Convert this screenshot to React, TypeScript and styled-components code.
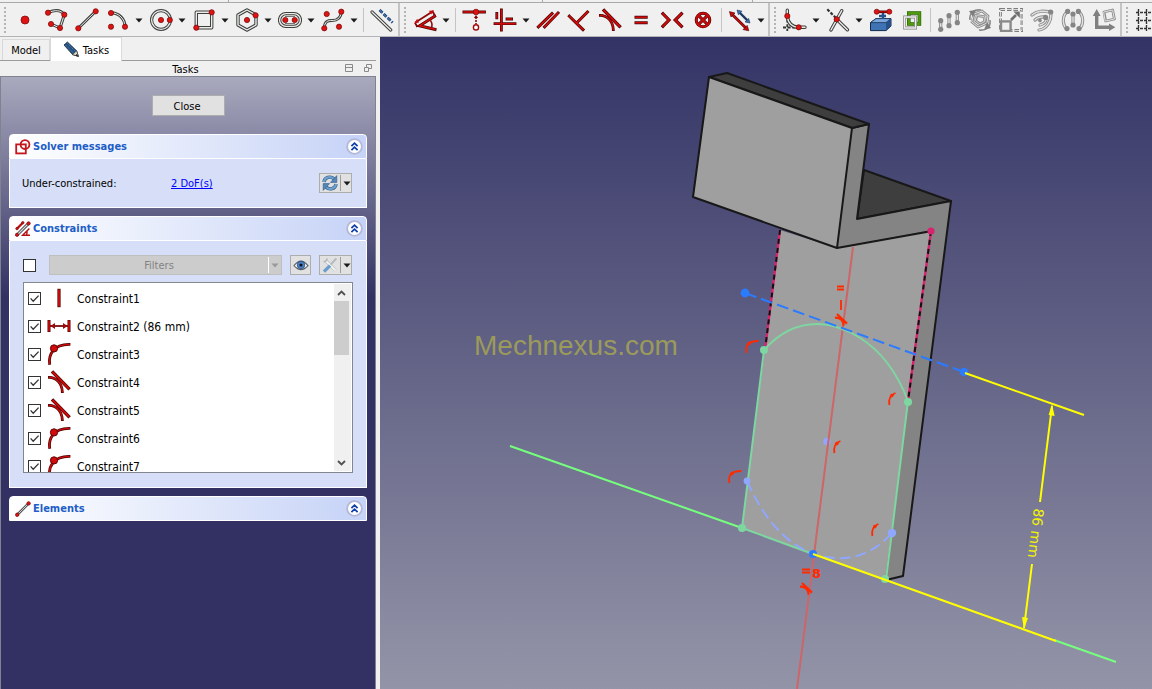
import React from "react";
import styled, { createGlobalStyle } from "styled-components";

const GlobalStyle = createGlobalStyle`
  * { box-sizing: border-box; }
  body {
    margin: 0;
    background: #f0f0f0;
    color: #000;
    font-family: "DejaVu Sans Condensed", "DejaVu Sans", sans-serif;
    font-size: 11px;
    line-height: 14px;
  }
  button, input { font: inherit; color: inherit; margin: 0; padding: 0; }
`;

/* ---------- window frame ---------- */

const Window = styled.div`
  display: flex;
  flex-direction: column;
  min-height: 100vh;
`;

const UpperEdge = styled.div`
  display: flex;
  flex: none;
  height: 3px;
  overflow: hidden;
  border-bottom: 1px solid #a9a9a9;
`;

const EdgeSegment = styled.div<{ $width: number }>`
  flex: none;
  width: ${(p) => p.$width}px;
  border-right: 1px solid #a9a9a9;
`;

const Toolbars = styled.div`
  display: flex;
  flex: none;
  height: 34px;
  overflow: hidden;
  border-bottom: 1px solid #b4b4b4;
`;

const ToolGroup = styled.div`
  display: flex;
  flex: none;
  padding-top: 1px;
  border-right: 2px solid #c4c4c4;
  &:last-child { border-right: 0; }
`;

const Grip = styled.div`
  flex: none;
  width: 2px;
  margin: 3px 4px;
  background: repeating-linear-gradient(#b4b4b4 0 2px, transparent 2px 4px);
`;

const ToolButton = styled.button<{ $menu?: boolean }>`
  display: flex;
  flex: none;
  align-items: center;
  gap: 5px;
  width: ${(p) => (p.$menu ? 43 : 31)}px;
  padding-left: 3px;
  border: 0;
  background: none;
`;

const ToolSeparator = styled.div`
  flex: none;
  width: 1px;
  margin: 4px 3px 4px 2px;
  background: #c4c4c4;
`;

const Main = styled.div`
  display: flex;
  flex: 1;
`;

/* ---------- dock ---------- */

const Dock = styled.aside`
  display: flex;
  flex-direction: column;
  flex: none;
  width: 380px;
  padding-right: 4px;
`;

const TabBar = styled.div`
  display: flex;
  align-items: flex-end;
  height: 24px;
  padding-left: 2px;
  border-bottom: 1px solid #9b9b9b;
`;

const Tab = styled.button<{ $active?: boolean }>`
  display: flex;
  align-items: center;
  justify-content: center;
  gap: 3px;
  width: ${(p) => (p.$active ? 72 : 48)}px;
  height: ${(p) => (p.$active ? 24 : 21)}px;
  margin-bottom: ${(p) => (p.$active ? -1 : 0)}px;
  border: 1px solid #d9d9d9;
  border-bottom: 0;
  background: ${(p) => (p.$active ? "#fff" : "#f0f0f0")};
`;

/* text set one pixel below the optical centre of its line */
const Caption = styled.span`
  padding-top: 2px;
`;

const DockTitle = styled.div`
  display: flex;
  align-items: center;
  height: 15px;
  gap: 8px;
  padding-right: 3px;
`;

const DockName = styled.div`
  flex: 1;
  padding: 2px 0 0 35px;
  text-align: center;
`;

const TitleButton = styled.button`
  display: flex;
  border: 0;
  background: none;
`;

const TaskArea = styled.div`
  flex: 1;
  padding: 18px 8px 0;
  border: 1px solid #7f8390;
  border-bottom: 0;
  background: linear-gradient(#a9a9be, #333164 220px);
`;

const PushButton = styled.button`
  display: block;
  width: 73px;
  height: 21px;
  margin: 0 auto 18px;
  padding: 2px 2px 0 0;
  border: 1px solid #adadad;
  background: #e1e1e1;
`;

const Card = styled.section`
  margin-bottom: 8px;
`;

const CardHeader = styled.header`
  display: flex;
  align-items: center;
  gap: 2px;
  height: 25px;
  padding: 0 3px 0 5px;
  border: 1px solid #fff;
  border-radius: 4px 4px 0 0;
  background: linear-gradient(90deg, #fff, #c6d3f7);
`;

const CardTitle = styled.h2`
  flex: 1;
  margin: 0;
  color: #215dc6;
  font-size: 11px;
  font-weight: bold;
  line-height: 14px;
`;

const Collapse = styled.button`
  display: flex;
  border: 0;
  background: none;
`;

const CardBody = styled.div`
  padding: 14px 13px;
  border: 1px solid #fff;
  border-top: 0;
  background: #d6dff7;
`;

const Row = styled.div`
  display: flex;
  align-items: center;
`;

const StatusLabel = styled.span`
  width: 149px;
  margin-left: -1px;
  padding-top: 2px;
`;

const StatusLink = styled.a`
  flex: 1;
  padding-top: 2px;
  color: #0000ff;
  text-decoration: underline;
`;

const SmallButton = styled.button<{ $width: number }>`
  display: flex;
  flex: none;
  align-items: center;
  justify-content: center;
  width: ${(p) => p.$width}px;
  height: 20px;
  margin-right: 1px;
  border: 1px solid #adadad;
  background: #e1e1e1;
`;

const SplitLine = styled.span`
  width: 1px;
  height: 16px;
  margin: 0 2px 0 1px;
  background: #9d9d9d;
`;

const Check = styled.input`
  appearance: none;
  flex: none;
  width: 13px;
  height: 13px;
  border: 1px solid #333;
  background: #fff;
`;

const CheckHolder = styled.span`
  display: grid;
  flex: none;
  > * { grid-area: 1 / 1; }
  > svg { pointer-events: none; z-index: 1; }
`;

const FilterRow = styled(Row)`
  margin-bottom: 7px;
`;

const FilterButton = styled.button`
  display: flex;
  flex: 1;
  align-items: center;
  height: 20px;
  margin: 0 8px 0 13px;
  border: 1px solid #bfbfbf;
  background: #cccccc;
  color: #838383;
`;

const FilterText = styled.span`
  flex: 1;
  padding-top: 2px;
`;

const FilterArrow = styled.span`
  display: flex;
  align-items: center;
  justify-content: center;
  width: 13px;
  height: 16px;
  border-left: 1px solid #fff;
`;

const EyeButton = styled(SmallButton)`
  margin-right: 8px;
`;

const ListBox = styled.div`
  display: flex;
  height: 191px;
  overflow: hidden;
  padding: 1px;
  border: 1px solid #828790;
  background: #fff;
`;

const List = styled.ul`
  flex: 1;
  margin: 0;
  padding: 0;
  list-style: none;
`;

const ListItem = styled.li`
  height: 28px;
`;

const ListLabel = styled.label`
  display: flex;
  align-items: center;
  gap: 6px;
  height: 28px;
  padding-left: 3px;
  font-size: 12px;
`;

const ScrollBar = styled.div`
  display: flex;
  flex-direction: column;
  width: 17px;
  padding-right: 2px;
  background: #f0f0f0;
`;

const ScrollButton = styled.button`
  display: flex;
  align-items: center;
  justify-content: center;
  height: 17px;
  border: 0;
  background: none;
`;

const ScrollTrack = styled.div`
  flex: 1;
`;

const ScrollThumb = styled.div`
  height: 54px;
  background: #cdcdcd;
`;

const Viewport = styled.main`
  flex: 1;
  min-width: 0;
  display: flex;
  background: linear-gradient(#333366, #9494a8);
`;

const Scene = styled.svg`
  display: block;
  width: 100%;
  height: 100%;
`;

/* ---------- icon strokes ---------- */

type P = { d: string; w?: number };

/* hollow geometry line: dark rim with a light core */
const Geo = ({ d, w = 3 }: P) => (
  <g fill="none" strokeLinecap="round" strokeLinejoin="round">
    <path d={d} stroke="#3c3f3c" strokeWidth={w} />
    <path d={d} stroke="#eceeea" strokeWidth={w - 2} />
  </g>
);

/* constraint line: dark red rim with a bright core */
const Red = ({ d, w = 3 }: P) => (
  <g fill="none" strokeLinecap="square">
    <path d={d} stroke="#4a0505" strokeWidth={w} />
    <path d={d} stroke="#d40a0a" strokeWidth={w - 1.4} />
  </g>
);

const Dot = ({ x, y, r = 2.6 }: { x: number; y: number; r?: number }) => (
  <circle cx={x} cy={y} r={r} fill="#e01313" stroke="#7d0c0c" strokeWidth=".8" />
);

/* disabled tool line */
const Gray = ({ d, w = 3 }: P) => (
  <g fill="none" strokeLinejoin="round" strokeLinecap="round">
    <path d={d} stroke="#8c8c8c" strokeWidth={w} />
    <path d={d} stroke="#e2e2e2" strokeWidth={w - 1.8} />
  </g>
);

const GrayDots = ({ at, r = 2.6 }: { at: number[][]; r?: number }) => (
  <g fill="#858585">
    {at.map(([x, y]) => (
      <circle key={`${x}-${y}`} cx={x} cy={y} r={r} />
    ))}
  </g>
);

const Icon = ({ size = 24, children }: { size?: number; children: React.ReactNode }) => (
  <svg width={size} height={size} viewBox="0 0 24 24" aria-hidden="true">
    {children}
  </svg>
);

const Down = ({ color = "#1a1a1a" }: { color?: string }) => (
  <svg width="8" height="5" viewBox="0 0 8 5" aria-hidden="true">
    <path d="M.5.5h7L4 4.5z" fill={color} />
  </svg>
);

const TangentShape = () => (
  <>
    <Red d="M2.4 7.4C9 7.6 15 13 15.3 21.6" w={2.8} />
    <Red d="M6.2 2.6L21.4 18.2" w={3.4} />
  </>
);

const icons: Record<string, React.ReactNode> = {
  point: <Dot x={12} y={12} r={4} />,
  polyline: (
    <>
      <Geo d="M4 4.7C11 1.5 17 2 20.3 6.7L16 20 7 16" />
      <Dot x={4} y={4.7} /><Dot x={20.3} y={6.7} /><Dot x={16} y={20} /><Dot x={7} y={16} />
    </>
  ),
  line: (
    <>
      <Geo d="M3.3 20.3L20.7 3.3" />
      <Dot x={3.3} y={20.3} /><Dot x={20.7} y={3.3} />
    </>
  ),
  arc: (
    <>
      <Geo d="M5 4.7C13 4.7 19 11 19 18.7" />
      <Dot x={5} y={5} /><Dot x={19} y={18.7} /><Dot x={5} y={18.7} />
    </>
  ),
  circle: (
    <>
      <circle cx="12" cy="12" r="9.4" fill="none" stroke="#3c3f3c" strokeWidth="3.2" />
      <circle cx="12" cy="12" r="9.4" fill="none" stroke="#eceeea" strokeWidth="1.3" />
      <Dot x={12} y={12} /><Dot x={20.8} y={12} />
    </>
  ),
  rect: (
    <>
      <Geo d="M4.3 4.3H19.7V19.7H4.3Z" w={3.4} />
      <Dot x={4.3} y={19.7} /><Dot x={19.7} y={4.3} />
    </>
  ),
  hexagon: (
    <>
      <Geo d="M12 2L21 7V17L12 22 3 17V7Z" w={3.4} />
      <Dot x={12} y={12} /><Dot x={20.6} y={7.3} />
    </>
  ),
  slot: (
    <>
      <Geo d="M8 5.6H16A6.4 6.4 0 0 1 16 18.4H8A6.4 6.4 0 0 1 8 5.6Z" w={3.4} />
      <path d="M7 8.5H17M7 15.5H17" stroke="#777" strokeWidth="1" />
      <Dot x={7.3} y={12} /><Dot x={16.7} y={12} />
    </>
  ),
  bspline: (
    <>
      <Geo d="M3.3 20.3C3.5 13 7 12.5 11 12.5S20 11 20.3 3.7" />
      <Dot x={5.7} y={6} /><Dot x={20.3} y={3.7} /><Dot x={3.3} y={20.3} /><Dot x={18} y={18.7} />
    </>
  ),
  construction: (
    <>
      <Geo d="M2 4L20.7 22" w={3.2} />
      <path d="M9.6 2L22.6 14.6" stroke="#1c3a63" strokeWidth="2.8" strokeDasharray="4 1.6" />
      <path d="M9.6 2L22.6 14.6" stroke="#3d73b3" strokeWidth="1.4" strokeDasharray="4 1.6" />
    </>
  ),
  dimension: (
    <>
      <path d="M2 14.7L20.3 3M2 14.7L4.4 19M19.4 3L22 8" stroke="#8d0909" strokeWidth="1.8" fill="none" />
      <path d="M1.4 15.2L4.2 10.8 6 14.4zM21 2.4L16 2.8 18 6.4z" fill="#cc0a0a" />
      <Red d="M21.6 8.2L6.6 17.8 22 21.4" w={3} />
      <path d="M17.4 12.4Q20 16 18.4 20" stroke="#9b0909" strokeWidth="1.6" fill="none" />
    </>
  ),
  pointOn: (
    <>
      <Red d="M2 4H22.4" />
      <Dot x={14} y={4} r={2.8} />
      <path d="M14 9V16" stroke="#8d0909" strokeWidth="1.6" strokeDasharray="2 1" />
      <path d="M14 7L16.2 10H11.8z" fill="#8d0909" />
      <circle cx="14" cy="19.4" r="2.6" fill="#fff" stroke="#a30b0b" strokeWidth="1.4" />
    </>
  ),
  horVert: <Red d="M8.4 2V22M2 15.7H22M3.8 5.4V9.8M14 11H18.6" w={2.8} />,
  parallel: <Red d="M2.4 18.8L16 5.6M8.6 18.8L22 5" w={3} />,
  perpendicular: <Red d="M2.4 8.2L16 21.6M9.6 15L20.4 4" w={3} />,
  tangent: <TangentShape />,
  equal: <Red d="M7 9.3H17.2M7 14.8H17.2" />,
  symmetric: <Red d="M3 5.8L9 12 3 18.2M21.4 5.8L15.2 12 21.4 18.2" w={3.2} />,
  block: (
    <>
      <circle cx="12" cy="12" r="6.8" fill="none" stroke="#4a0505" strokeWidth="3" />
      <path d="M7.6 7.6L16.4 16.4M16.4 7.6L7.6 16.4" stroke="#4a0505" strokeWidth="3" />
      <circle cx="12" cy="12" r="6.8" fill="none" stroke="#d40a0a" strokeWidth="1.7" />
      <path d="M7.6 7.6L16.4 16.4M16.4 7.6L7.6 16.4" stroke="#d40a0a" strokeWidth="1.7" />
    </>
  ),
  toggle: (
    <>
      <path d="M11 4L20.4 13.4" stroke="#1c3a63" strokeWidth="2.4" />
      <path d="M9 2L14 3.2 10.4 6.8zM22 15L17 14 20.6 10.4z" fill="#3d6cab" stroke="#1c3a63" strokeWidth=".6" />
      <Red d="M4 6.2L18.4 20.4" w={2.8} />
      <path d="M1.4 3.6L7 5 3 9zM20.8 22.8L15 21.6 19.2 17.4z" fill="#c80a0a" stroke="#4a0505" strokeWidth=".6" />
    </>
  ),
  fillet: (
    <>
      <path d="M4.3 7V23M0 19.5H16" stroke="#333" strokeWidth="1.8" strokeDasharray="3 1.6" />
      <Geo d="M4.3 2.2V8Q5.4 19 15.7 19.3H22" w={3.4} />
      <Dot x={4.3} y={8} /><Dot x={15.7} y={19.3} />
    </>
  ),
  trim: (
    <>
      <path d="M1.3 1.3L10 10" stroke="#333" strokeWidth="2.2" strokeDasharray="3 1.6" />
      <Geo d="M5 22L15.7 2.7M10.7 11.3L21.4 21.8" w={3.4} />
      <Dot x={10.7} y={11.3} />
    </>
  ),
  external: (
    <>
      <path d="M1.5 14.6L7 10.6H22V18L17 22.6H1.5Z" fill="#3f73b4" stroke="#12294b" />
      <path d="M1.5 14.6L7 10.6H22L17 14.6Z" fill="#7ba6da" stroke="#12294b" strokeWidth=".7" />
      <path d="M17 14.6V22.6L22 18V10.6Z" fill="#26508a" />
      <path d="M14 4V11M10 8H17" stroke="#26508a" strokeWidth="2.4" />
      <Red d="M7.7 3.8H20.3" w={2.6} />
      <Dot x={7.7} y={3.7} r={2.5} /><Dot x={20.3} y={3.7} r={2.5} />
    </>
  ),
  carbon: (
    <>
      <path d="M8.8 5H19.4V16H8.8Z" fill="none" stroke="#2d5c07" strokeWidth="3.6" />
      <path d="M8.8 5H19.4V16H8.8Z" fill="none" stroke="#4d9a0c" strokeWidth="2.4" />
      <path d="M4.6 9H15.6V20H4.6Z" fill="none" stroke="#808080" strokeWidth="2.8" />
      <path d="M4.6 9H15.6V20H4.6Z" fill="none" stroke="#eeeeee" strokeWidth="1.4" />
    </>
  ),
  symmetryTool: (
    <>
      <Gray d="M3.7 12.7V21.3M12 7.7V17.7M20.3 4.3V14.7" w={3.2} />
      <GrayDots at={[[3.7, 12.7], [3.7, 21.3], [12, 7.7], [12, 17.7], [20.3, 4.3], [20.3, 14.7]]} />
    </>
  ),
  rotateTool: (
    <>
      <Gray d="M6 6L14 3 20 8 19 15 10 19 4 14Z" w={2.8} />
      <Gray d="M9 7.6L16 8.6 16.6 13.6 12 16 7.6 12.6Z" w={2.6} />
      <path d="M2 12C1 5 6 1 13 2M22 12C23 19 18 23 11 22" fill="none" stroke="#8c8c8c" strokeWidth="1.6" />
      <path d="M1 3L8 2 5 9zM23 20L16 22 19 14z" fill="#7d7d7d" />
    </>
  ),
  scaleTool: (
    <>
      <rect x="1.5" y="1.5" width="21.5" height="21" fill="none" stroke="#7d7d7d" strokeWidth="2.8" strokeDasharray="4.5 2" />
      <rect x="1.5" y="1.5" width="21.5" height="21" fill="none" stroke="#e8e8e8" strokeWidth=".9" strokeDasharray="4.5 2" />
      <rect x="2" y="13.4" width="9.6" height="9.6" fill="#f0f0f0" stroke="#8a8a8a" strokeWidth="2.4" />
      <path d="M12 12L17 7" stroke="#6f6f6f" strokeWidth="2.6" />
      <path d="M20.8 3.4V10L14.4 3.4z" fill="#6f6f6f" />
    </>
  ),
  offsetTool: (
    <>
      <Gray d="M2 7C8 2 14 3 20.7 4C22 14 16 21 9 22" w={3.2} />
      <Gray d="M5 12C9 8 13 9 16 9C17 13 14 16 10 17" w={3.2} />
      <GrayDots at={[[20.7, 4], [15.6, 9.4]]} />
      <GrayDots at={[[10, 12.6]]} r={1.8} />
    </>
  ),
  copyTool: (
    <>
      <Gray d="M7 3C1 7 1 17 6 21M17 3C23 7 23 17 18 21M12 6V17" w={3.2} />
      <GrayDots at={[[6.6, 3.4], [6, 20.6], [17.4, 3.4], [18, 20.6], [12, 6], [12, 17]]} />
    </>
  ),
  moveTool: (
    <>
      <path d="M4.7 20V6M3 19.3H18" stroke="#808080" strokeWidth="3.4" />
      <path d="M4.7 1L8.6 8H.8zM23.4 19.3L17 23V15.6z" fill="#808080" />
      <Gray d="M12 4L20.6 2 22.4 11 13.6 13Z" w={2.8} />
    </>
  ),
  grid: (
    <path
      d="M3.5 1V23M11.5 1V23M19.5 1V23M1 4.5H24M1 12.5H24M1 20.5H24"
      stroke="#333" strokeWidth="1.4" strokeDasharray="3 1"
    />
  ),
};

type Tool = { icon: string; label: string; menu?: boolean };

const t = (icon: string, label: string, menu = false): Tool => ({ icon, label, menu });

/* null marks a separator */
const toolGroups: (Tool | null)[][] = [
  [
    t("point", "Point"), t("polyline", "Polyline"), t("line", "Line"), t("arc", "Arc", true),
    t("circle", "Circle", true), t("rect", "Rectangle", true), t("hexagon", "Polygon", true),
    t("slot", "Slot", true), t("bspline", "B-spline", true), null,
    t("construction", "Toggle construction geometry"),
  ],
  [
    t("dimension", "Dimension", true), null, t("pointOn", "Coincident"),
    t("horVert", "Horizontal or vertical", true), t("parallel", "Parallel"),
    t("perpendicular", "Perpendicular"), t("tangent", "Tangent"), t("equal", "Equal"),
    t("symmetric", "Symmetric"), t("block", "Block"), null, t("toggle", "Toggle driving", true),
  ],
  [
    t("fillet", "Fillet", true), t("trim", "Trim", true), t("external", "External geometry"),
    t("carbon", "Carbon copy"), null, t("symmetryTool", "Array"), t("rotateTool", "Rotate"),
    t("scaleTool", "Scale"), t("offsetTool", "Offset"), t("copyTool", "Mirror"), t("moveTool", "Move"),
  ],
  [t("grid", "Grid")],
];

/* ---------- panel icons ---------- */

const Pencil = () => (
  <svg width="17" height="17" viewBox="0 0 17 17" aria-hidden="true">
    <path d="M1 4L4.4 1 13.6 9.8 15.4 15.4 9.6 13.6Z" fill="#24507f" stroke="#16263b" strokeWidth=".8" />
    <path d="M2.4 4L11 12.6M4.4 2.4L12.8 10.8" stroke="#5d8cbb" strokeWidth=".8" strokeDasharray="1.4 .8" />
    <path d="M13.6 9.8L15.4 15.4 9.6 13.6Z" fill="#e4dccb" stroke="#222" strokeWidth=".6" />
    <path d="M13.4 13L15.6 15.6 12.6 14.6Z" fill="#111" />
  </svg>
);

const SketchIcon = () => (
  <svg width="16" height="16" viewBox="0 0 16 16" fill="none" stroke="#c4161c" strokeWidth="1.8" aria-hidden="true">
    <rect x="1.2" y="5.4" width="9.6" height="9" />
    <circle cx="10" cy="5.6" r="4.4" />
  </svg>
);

const ConstraintsIcon = () => (
  <svg width="16" height="16" viewBox="0 0 16 16" aria-hidden="true">
    <path d="M2 14L13.6 2.4" stroke="#444" strokeWidth="3" />
    <path d="M2 14L13.6 2.4" stroke="#ddd" strokeWidth="1.2" />
    <path d="M2 7.6L7.6 2" stroke="#b80d12" strokeWidth="2.2" />
    <path d="M14.4 7.4L7.6 14.2H15M12.2 10.4L11.6 14" stroke="#b80d12" strokeWidth="1.4" fill="none" />
    <Dot x={2} y={13.8} r={1.6} /><Dot x={13.6} y={2.4} r={1.6} />
    <Dot x={2} y={7.6} r={1.2} /><Dot x={7.8} y={1.8} r={1.2} />
  </svg>
);

const ElementsIcon = () => (
  <svg width="16" height="16" viewBox="0 0 16 16" aria-hidden="true">
    <path d="M2 14L13.6 2.4" stroke="#555" strokeWidth="2.6" />
    <path d="M2 14L13.6 2.4" stroke="#ddd" strokeWidth=".9" />
    <Dot x={2.2} y={13.8} r={1.7} /><Dot x={13.6} y={2.4} r={1.7} />
  </svg>
);

const ChevronUp2 = () => (
  <svg width="17" height="17" viewBox="0 0 17 17" aria-hidden="true">
    <circle cx="8.5" cy="8.5" r="7.4" fill="#fff" stroke="#b4b8d8" strokeWidth="1.8" />
    <path d="M5.4 8.2L8.5 5.2 11.6 8.2M5.4 12.2L8.5 9.2 11.6 12.2" fill="none" stroke="#0f3fa8" strokeWidth="1.8" />
  </svg>
);

const RefreshIcon = () => (
  <svg width="18" height="18" viewBox="0 0 18 18" fill="none" aria-hidden="true">
    <path d="M3 8C3.4 3.4 9.6 1.4 13 5M15 10C14.6 14.6 8.4 16.6 5 13" stroke="#2d5987" strokeWidth="3.4" />
    <path d="M3 8C3.4 3.4 9.6 1.4 13 5M15 10C14.6 14.6 8.4 16.6 5 13" stroke="#6f9fcb" strokeWidth="2.4" />
    <path d="M15.8 1.6V8.4H9.4zM2.2 16.4V9.6H8.6z" fill="#5587b8" stroke="#2d5987" strokeWidth=".6" />
  </svg>
);

const EyeIcon = () => (
  <svg width="16" height="13" viewBox="0 0 16 13" aria-hidden="true">
    <path d="M1 6.6Q8-2.4 15 6.6Q8 14.6 1 6.6Z" fill="#fff" stroke="#5b6066" strokeWidth="1.1" />
    <circle cx="8" cy="6" r="3.8" fill="#4d83c0" stroke="#254a78" strokeWidth=".8" />
    <circle cx="8" cy="6" r="1.6" fill="#0b1526" />
  </svg>
);

const SettingsIcon = () => (
  <svg width="18" height="16" viewBox="0 0 18 16" fill="none" aria-hidden="true">
    <path d="M4 3L14.4 13.4" stroke="#b5b9bd" strokeWidth="3.4" />
    <path d="M4 3L14.4 13.4" stroke="#eef0f1" strokeWidth="2.2" />
    <path d="M2.6 4.6A3 3 0 0 0 6 1.4" stroke="#b5b9bd" strokeWidth="1.6" />
    <path d="M15.4 1.4L9.6 7.6" stroke="#b4b9be" strokeWidth="2" />
    <path d="M9 8.6L3 14.6" stroke="#6b9ccc" strokeWidth="3.4" />
  </svg>
);

const Tick = () => (
  <svg width="13" height="13" viewBox="0 0 13 13" aria-hidden="true">
    <path d="M2.6 6.4L5.2 9.2 10.6 3.6" fill="none" stroke="#333" strokeWidth="1.3" />
  </svg>
);

const rowIcons: Record<string, React.ReactNode> = {
  vertical: <Red d="M12 4.4V19.6" w={3.2} />,
  distance: (
    <>
      <Red d="M2 7.4V16.6M22 7.4V16.6" w={3} />
      <path d="M3 12H21" stroke="#7a0707" strokeWidth="1.8" />
      <path d="M3.4 12L8 9V15zM20.6 12L16 9V15z" fill="#9b0a0a" />
    </>
  ),
  coincident: (
    <>
      <Red d="M2.6 21.4C1.6 13 6 2.6 22 2.4" w={2.8} />
      <circle cx="7" cy="6.4" r="3.6" fill="#d40a0a" stroke="#5d0606" />
    </>
  ),
  tangent: <TangentShape />,
};

const constraints = [
  { name: "Constraint1", icon: "vertical" },
  { name: "Constraint2 (86 mm)", icon: "distance" },
  { name: "Constraint3", icon: "coincident" },
  { name: "Constraint4", icon: "tangent" },
  { name: "Constraint5", icon: "tangent" },
  { name: "Constraint6", icon: "coincident" },
  { name: "Constraint7", icon: "coincident" },
];

const Section = ({ icon, title, children }: { icon: React.ReactNode; title: string; children?: React.ReactNode }) => (
  <Card>
    <CardHeader>
      {icon}
      <CardTitle>{title}</CardTitle>
      <Collapse aria-label={`Collapse ${title}`}><ChevronUp2 /></Collapse>
    </CardHeader>
    {children}
  </Card>
);

/* ---------- 3D scene ---------- */

const MarkArc = ({ x, y, wide }: { x: number; y: number; wide?: boolean }) => (
  <g transform={`translate(${x} ${y})`} stroke="#ff2a00" strokeWidth="1.8" fill="none">
    <path d={wide ? "M1.4 13C.4 6 2 1 13.4 1" : "M1.4 13C.4 7 2 3 7.4 1"} />
    <circle cx={wide ? 4 : 3.8} cy="3.6" r="1.8" fill="#ff2a00" stroke="none" />
  </g>
);

const MarkTangent = ({ x, y }: { x: number; y: number }) => (
  <g transform={`translate(${x} ${y})`} stroke="#ff2a00" strokeWidth="2.2" fill="none">
    <path d="M2 1L12 10.6M0 4.6C6 4.4 8.4 7 8.6 12.6" />
  </g>
);

const Model = () => (
  <Scene viewBox="380 37 772 652" preserveAspectRatio="xMidYMid slice" role="img" aria-label="Sketch in 3D view">
    <text x="474" y="355" fontFamily="Liberation Sans, sans-serif" fontSize="28" fill="#9b9a5b">Mechnexus.com</text>

    <g stroke="#181818" strokeWidth="2" strokeLinejoin="round">
      <path d="M780 230L837 248 932 231 885 580 742 528Z" fill="#9f9f9f" stroke="none" />
      <path d="M864 170L951 201 857 219Z" fill="#3e3e3e" />
      <path d="M852 128L869 124 857 219 951 201 903 576 885 579 932 230 837 248Z" fill="#848484" stroke="none" />
      <path d="M852 128L869 124 857 219 951 201 903 576 886 580M932 231L837 248" fill="none" />
      <path d="M709 77L727 73 869 124 852 128Z" fill="#3e3e3e" />
      <path d="M709 77L852 128 837 248 693 197Z" fill="#9f9f9f" />
    </g>

    <circle cx="827" cy="441.500" r="3.800" fill="#8fa7ff" />
    <path d="M853 247L797 689" stroke="#cc6668" strokeWidth="2" />

    <g fill="none" strokeWidth="2">
      <path d="M780 230L765 350M931 231L908 401" stroke="#d6246e" strokeWidth="2.4" />
      <path d="M780 230L765 350M931 231L908 401" stroke="#111" strokeDasharray="5 4" />
      <path d="M764 350L742 528 813 554M908 401L886 580" stroke="#7ed6a0" />
      <path d="M764 350C780 332 799 324 817 324C835 324 883 335 908 401" stroke="#7ed6a0" />
      <path d="M510 446L742 528M1054 640L1116 662" stroke="#76ff7e" />
      <path d="M745 293L964 372" stroke="#2b7bff" strokeDasharray="12 5" />
      <path d="M747 481C765 521 785 542 813 554C842 563 870 558 892 533" stroke="#8fa7ff" strokeDasharray="11 5" />
    </g>

    <g fill="#7ed6a0">
      <circle cx="764" cy="350" r="4" /><circle cx="908" cy="402" r="4" />
      <circle cx="742" cy="528" r="4" /><circle cx="885" cy="579" r="4" />
    </g>
    <g fill="#8fa7ff">
      <circle cx="747" cy="481" r="3.4" /><circle cx="892" cy="533" r="4.2" />
    </g>
    <g fill="#2b7bff">
      <circle cx="745" cy="293" r="4.4" /><circle cx="964" cy="372" r="4.2" />
      <circle cx="813" cy="554" r="4" />
    </g>
    <circle cx="931" cy="231" r="3.600" fill="#d6246e" />

    <path
      d="M965 373L1084 415M813 554L1056 641M1052 406L1040 502M1032 564L1024 628"
      stroke="#ffff00" strokeWidth="2" fill="none"
    />
    <path d="M1052 404L1054.6 416 1048.6 415ZM1024 629L1022 617 1028 618Z" fill="#ffff00" />
    <text
      transform="translate(1034 508) rotate(97)"
      fontFamily="DejaVu Sans, sans-serif"
      fontSize="14"
      fill="#f4f400"
    >
      86 mm
    </text>

    <MarkArc x={745} y={340} wide />
    <MarkArc x={888} y={392} />
    <MarkArc x={833} y={440} />
    <MarkArc x={728} y={470} wide />
    <MarkArc x={871} y={523} />
    <MarkTangent x={835} y={313} />
    <MarkTangent x={800} y={582} />
    <path d="M837 286.5H844M837 289.5H844M841 300V310M802 569.5H810M802 572.5H810" stroke="#ff2a00" strokeWidth="1.8" />
    <text x="812" y="578" fontFamily="DejaVu Sans, sans-serif" fontWeight="bold" fontSize="13" fill="#ff2a00">8</text>
  </Scene>
);

export default function App() {
  return (
    <Window>
      <GlobalStyle />
      <UpperEdge>
        <EdgeSegment $width={229} />
        <EdgeSegment $width={314} />
        <EdgeSegment $width={210} />
      </UpperEdge>
      <Toolbars role="toolbar">
        {toolGroups.map((group, g) => (
          <ToolGroup key={g}>
            <Grip />
            {group.map((tool, i) =>
              tool ? (
                <ToolButton key={tool.icon} $menu={tool.menu} aria-label={tool.label}>
                  <Icon>{icons[tool.icon]}</Icon>
                  {tool.menu && <Down />}
                </ToolButton>
              ) : (
                <ToolSeparator key={`sep-${i}`} />
              )
            )}
          </ToolGroup>
        ))}
      </Toolbars>

      <Main>
        <Dock>
          <TabBar>
            <Tab><Caption>Model</Caption></Tab>
            <Tab $active><Pencil /><Caption>Tasks</Caption></Tab>
          </TabBar>
          <DockTitle>
            <DockName>Tasks</DockName>
            <TitleButton aria-label="Minimize">
              <svg width="11" height="9" viewBox="0 0 11 9" fill="none" stroke="#8a8a8a">
                <path d="M1.5.5h7v7h-7zM1.5 3.5h7" />
              </svg>
            </TitleButton>
            <TitleButton aria-label="Float">
              <svg width="10" height="9" viewBox="0 0 10 9" fill="none" stroke="#8a8a8a">
                <path d="M1.5 3.5h4v4h-4zM3.500 3V.5h5v4H6" />
              </svg>
            </TitleButton>
          </DockTitle>

          <TaskArea>
            <PushButton>Close</PushButton>

            <Section icon={<SketchIcon />} title="Solver messages">
              <CardBody>
                <Row>
                  <StatusLabel>Under-constrained:</StatusLabel>
                  <StatusLink href="#dof">2 DoF(s)</StatusLink>
                  <SmallButton $width={33} aria-label="Refresh">
                    <RefreshIcon />
                    <SplitLine />
                    <Down />
                  </SmallButton>
                </Row>
              </CardBody>
            </Section>

            <Section icon={<ConstraintsIcon />} title="Constraints">
              <CardBody>
                <FilterRow>
                  <Check type="checkbox" aria-label="Enable filters" />
                  <FilterButton disabled>
                    <FilterText>Filters</FilterText>
                    <FilterArrow><Down color="#9a9a9a" /></FilterArrow>
                  </FilterButton>
                  <EyeButton $width={21} aria-label="Show or hide"><EyeIcon /></EyeButton>
                  <SmallButton $width={33} aria-label="Settings">
                    <SettingsIcon />
                    <SplitLine />
                    <Down />
                  </SmallButton>
                </FilterRow>
                <ListBox>
                  <List>
                    {constraints.map((c) => (
                      <ListItem key={c.name}>
                        <ListLabel>
                          <CheckHolder>
                            <Check type="checkbox" defaultChecked />
                            <Tick />
                          </CheckHolder>
                          <Icon>{rowIcons[c.icon]}</Icon>
                          <Caption>{c.name}</Caption>
                        </ListLabel>
                      </ListItem>
                    ))}
                  </List>
                  <ScrollBar>
                    <ScrollButton aria-label="Scroll up">
                      <svg width="9" height="6" viewBox="0 0 9 6"><path d="M1 5L4.5 1.5 8 5" fill="none" stroke="#505050" strokeWidth="1.8" /></svg>
                    </ScrollButton>
                    <ScrollTrack><ScrollThumb /></ScrollTrack>
                    <ScrollButton aria-label="Scroll down">
                      <svg width="9" height="6" viewBox="0 0 9 6"><path d="M1 1L4.5 4.5 8 1" fill="none" stroke="#505050" strokeWidth="1.8" /></svg>
                    </ScrollButton>
                  </ScrollBar>
                </ListBox>
              </CardBody>
            </Section>

            <Section icon={<ElementsIcon />} title="Elements" />
          </TaskArea>
        </Dock>

        <Viewport>
          <Model />
        </Viewport>
      </Main>
    </Window>
  );
}
